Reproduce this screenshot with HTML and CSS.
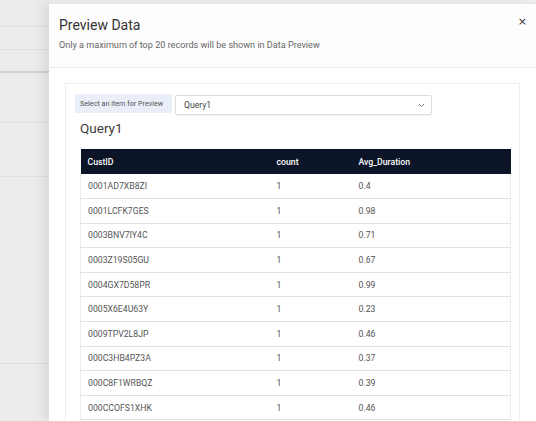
FILE: index.html
```html
<!DOCTYPE html>
<html lang="en">
<head>
  <meta charset="UTF-8" />
  <meta name="viewport" content="width=device-width, initial-scale=1.0" />
  <title>Preview Data</title>
  <link rel="stylesheet" href="styles.css">
</head>
<body>
  <div class="backdrop">
    <div class="bg-row" style="height: 27px"></div>
    <div class="bg-row" style="height: 23px"></div>
    <div class="bg-row dark" style="height: 23px"></div>
    <div class="bg-row" style="height: 50px"></div>
    <div class="bg-row" style="height: 54px"></div>
    <div class="bg-row" style="height: 187px"></div>
  </div>

  <div class="modal">
    <div class="modal-header">
      <div class="modal-title">Preview Data</div>
      <div class="modal-subtitle">Only a maximum of top 20 records will be shown in Data Preview</div>
      <button class="close-btn">&times;</button>
    </div>

    <div class="modal-body">
      <div class="card">
        <div class="picker">
          <span class="picker-label">Select an item for Preview</span>
          <div class="picker-select">
            <span>Query1</span>
            <svg width="7" height="5" viewBox="0 0 7 5"><path d="M1 1 L3.5 3.5 L6 1" fill="none" stroke="#777" stroke-width="1"/></svg>
          </div>
        </div>
        <h2 class="query-name">Query1</h2>
        <table class="data-table">
          <thead>
            <tr>
              <th class="col-id">CustID</th>
              <th class="col-count">count</th>
              <th>Avg_Duration</th>
            </tr>
          </thead>
          <tbody id="rows"></tbody>
        </table>
      </div>
    </div>
  </div>

  <script>
    const records = [
      ["0001AD7XB8ZI", 1, 0.4],
      ["0001LCFK7GES", 1, 0.98],
      ["0003BNV7IY4C", 1, 0.71],
      ["0003Z19S05GU", 1, 0.67],
      ["0004GX7D58PR", 1, 0.99],
      ["0005X6E4U63Y", 1, 0.23],
      ["0009TPV2L8JP", 1, 0.46],
      ["000C3HB4PZ3A", 1, 0.37],
      ["000C8F1WRBQZ", 1, 0.39],
      ["000CCOFS1XHK", 1, 0.46]
    ];

    const tbody = document.getElementById("rows");
    records.forEach(r => {
      const row = tbody.insertRow();
      r.forEach(v => { row.insertCell().textContent = v; });
    });
  </script>
</body>
</html>
```

FILE: styles.css
```css
body {
  margin: 0;
  height: 421px;
  overflow: hidden;
  display: flex;
  font-family: Roboto, "Liberation Sans", sans-serif;
  background-color: #f0f0f0;
}
.backdrop {
  width: 49px;
  flex-shrink: 0;
  background-color: #ececec;
}
.bg-row {
  border-bottom: 1px solid #e0e0e0;
  box-sizing: border-box;
}
.bg-row.dark {
  border-bottom: 2px solid #d2d2d2;
}
.modal {
  flex: 1;
  position: relative;
  margin-top: 3px;
  border-top: 1px solid #e6e6e6;
  background-color: #fff;
  box-shadow: -6px 0 12px rgba(0, 0, 0, 0.08);
}
.modal-header {
  padding: 12px 10px 16px 10px;
  border-bottom: 1px solid #ececec;
  background-color: #fdfdfd;
}
.modal-title {
  font-size: 14px;
  line-height: 18px;
  color: #333;
}
.modal-subtitle {
  margin-top: 5px;
  font-size: 9.1px;
  line-height: 12px;
  color: #666;
}
.close-btn {
  position: absolute;
  top: 12px;
  right: 9px;
  border: none;
  background: none;
  padding: 0;
  font-size: 11px;
  line-height: 12px;
  color: #333;
  font-family: "DejaVu Sans", sans-serif;
}
.modal-body {
  padding: 15px 16px 0 16px;
}
.card {
  border: 1px solid #eee;
  border-bottom: none;
  padding: 10px 8px 0 9px;
  height: 400px;
}
.picker {
  display: flex;
  align-items: flex-start;
  gap: 3px;
}
.picker-label {
  background-color: #e9eef8;
  height: 19px;
  width: 97px;
  box-sizing: border-box;
  padding-left: 5px;
  font-size: 7.2px;
  line-height: 19px;
  color: #555;
}
.picker-select {
  width: 257px;
  height: 20px;
  margin-top: 1px;
  box-sizing: border-box;
  border: 1px solid #dcdcdc;
  border-radius: 2px;
  display: flex;
  align-items: center;
  justify-content: space-between;
  padding: 0 6px 0 8px;
  font-size: 8.6px;
  color: #444;
  box-shadow: 0 1px 1px rgba(0, 0, 0, 0.05);
}
.query-name {
  margin: 5px 0 0 5px;
  font-size: 13.5px;
  line-height: 16px;
  font-weight: 400;
  color: #3a3a3a;
}
.data-table {
  margin: 13px 0 0 5px;
  width: calc(100% - 5px);
  border-collapse: collapse;
  font-size: 8.7px;
  table-layout: fixed;
}
.data-table th {
  background-color: #0c1428;
  color: #fff;
  font-weight: 500;
  text-align: left;
  height: 25px;
  padding: 0 7px;
}
.data-table td {
  height: 24.6px;
  padding: 0 7px;
  color: #555;
  border-bottom: 1px solid #e2e2e2;
  box-sizing: border-box;
}
.data-table tbody tr {
  border-left: 1px solid #eee;
  border-right: 1px solid #eee;
}
.col-id {
  width: 175px;
}
.col-count {
  width: 68px;
}
```
